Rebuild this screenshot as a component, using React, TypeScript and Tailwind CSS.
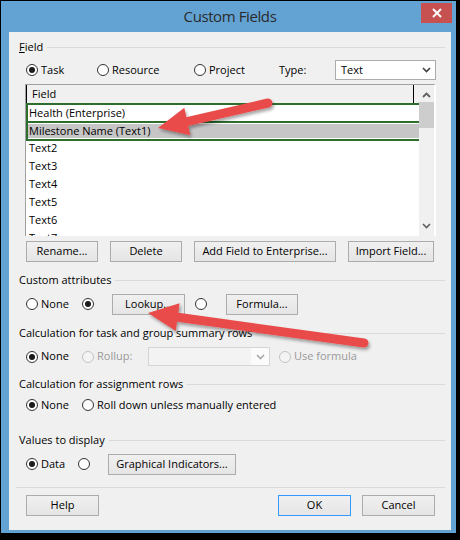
import React from "react";

function Radio({ checked = false, disabled = false }: { checked?: boolean; disabled?: boolean }) {
  return (
    <span
      className={
        disabled
          ? "flex h-3 w-3 shrink-0 items-center justify-center rounded-full border border-[#c2c2c2] bg-[#f4f4f4]"
          : "flex h-3 w-3 shrink-0 items-center justify-center rounded-full border border-[#333333] bg-white"
      }
    >
      {checked && <span className="h-[6px] w-[6px] rounded-full bg-[#1a1a1a]" />}
    </span>
  );
}

function RadioLabel({
  label,
  checked = false,
  disabled = false,
  className = "",
}: {
  label?: string;
  checked?: boolean;
  disabled?: boolean;
  className?: string;
}) {
  return (
    <div className={"flex shrink-0 items-center gap-[3px] " + className}>
      <Radio checked={checked} disabled={disabled} />
      {label && <span className={disabled ? "text-[#9a9a9a]" : "text-black"}>{label}</span>}
    </div>
  );
}

function Btn({ children, className = "", focused = false }: { children: React.ReactNode; className?: string; focused?: boolean }) {
  return (
    <div
      className={
        (focused ? "border-[#3399ff] " : "border-[#acacac] ") +
        "flex h-[21px] shrink-0 items-center justify-center border bg-linear-to-b from-[#f0f0f0] to-[#e5e5e5] text-black " +
        className
      }
    >
      {children}
    </div>
  );
}

function Section({ children, gap = "ml-[4px]" }: { children: React.ReactNode; gap?: string }) {
  return (
    <div className="flex h-4 items-center">
      <span className="whitespace-nowrap">{children}</span>
      <div className={"h-px flex-1 bg-[#dadada] " + gap} />
    </div>
  );
}

function ChevDown({ color = "#404040" }: { color?: string }) {
  return (
    <svg width="9" height="6" viewBox="0 0 9 6">
      <path d="M1 1 L4.5 4.5 L8 1" fill="none" stroke={color} strokeWidth="1.6" />
    </svg>
  );
}

function ChevUp({ color = "#606060" }: { color?: string }) {
  return (
    <svg width="9" height="6" viewBox="0 0 9 6">
      <path d="M1 5 L4.5 1.5 L8 5" fill="none" stroke={color} strokeWidth="1.8" />
    </svg>
  );
}

export default function App() {
  const rows = ["Text2", "Text3", "Text4", "Text5", "Text6", "Text7"];
  return (
    <div className="relative h-[540px] w-[460px] overflow-hidden bg-black pl-px pt-px font-['Open_Sans','Noto_Sans',sans-serif] text-[11px] text-black">
      <div className="flex h-[532px] w-[455px] flex-col bg-[#63a3d4]">
        {/* Title bar */}
        <div className="grid h-[31px] grid-cols-[1fr_auto_1fr]">
          <div />
          <div className="flex items-center pl-[3px] text-[15px] tracking-[-0.4px] text-[#2a2a2a]">Custom Fields</div>
          <div className="flex items-start justify-end pr-[4px] pt-[2px]">
            <div className="flex h-[20px] w-[31px] items-center justify-center bg-[#c75050]">
              <svg width="10" height="10" viewBox="0 0 10 10">
                <path d="M1 1 L9 9 M9 1 L1 9" stroke="#ffffff" strokeWidth="2" />
              </svg>
            </div>
          </div>
        </div>

        {/* Client */}
        <div className="ml-[8px] mr-[5px] flex h-[498px] flex-col bg-[#f0f0f0] pl-[10px] pr-[6px] pt-[7px]">
          <Section>
            <span className="underline">F</span>ield
          </Section>

          {/* Task / Resource / Project / Type */}
          <div className="ml-[7px] mt-[5px] flex h-[20px] items-center">
            <RadioLabel label="Task" checked className="w-[71px]" />
            <RadioLabel label="Resource" className="w-[97px]" />
            <RadioLabel label="Project" className="w-[85px]" />
            <span className="w-[56px]">Type:</span>
            <div className="flex h-[20px] w-[101px] items-center justify-between border border-[#acacac] bg-white pl-[5px] pr-[4px]">
              <span>Text</span>
              <ChevDown />
            </div>
          </div>

          {/* List */}
          <div className="ml-[6px] mt-[4px] flex h-[152px] w-[411px] border-l border-t border-[#a0a0a0] border-r-2 border-r-white bg-white">
            <div className="flex w-[393px] flex-col overflow-hidden">
              <div className="flex h-[18px] shrink-0 bg-[#f0f0f0]">
                <div className="flex w-[388px] items-center border-l border-r border-black pl-[5px]">Field</div>
              </div>
              <div className="shrink-0 border-b-2 border-l-2 border-t-2 border-[#2d6e2d]">
                <div className="flex h-[16px] items-center pl-px">Health (Enterprise)</div>
                <div className="h-[2px] bg-[#2d6e2d]" />
                <div className="h-[16px] pb-px pt-px">
                  <div className="flex h-[14px] items-center bg-[#c6c6c6] pl-px">Milestone Name (Text1)</div>
                </div>
              </div>
              <div className="-mt-[2px] flex flex-col">
                {rows.map((r) => (
                  <div key={r} className="flex h-[18px] shrink-0 items-center pl-[3px]">
                    {r}
                  </div>
                ))}
              </div>
            </div>
            <div className="flex w-[15px] flex-col bg-[#f0f0f0]">
              <div className="flex h-[17px] items-center justify-center pt-[2px]">
                <ChevUp />
              </div>
              <div className="h-[26px] bg-[#cdcdcd]" />
              <div className="flex-1" />
              <div className="flex h-[17px] items-center justify-center pb-[4px]">
                <ChevDown color="#606060" />
              </div>
            </div>
          </div>

          {/* Buttons */}
          <div className="ml-[7px] mt-[5px] flex h-[21px] gap-[12px]">
            <Btn className="w-[72px]">Rename...</Btn>
            <Btn className="w-[72px]">Delete</Btn>
            <Btn className="w-[142px]">Add Field to Enterprise...</Btn>
            <Btn className="w-[86px]">Import Field...</Btn>
          </div>

          <div className="mt-[10px]">
            <Section gap="ml-[3px]">Custom attributes</Section>
          </div>
          <div className="ml-[7px] mt-[6px] flex h-[20px] items-center">
            <RadioLabel label="None" className="w-[56px]" />
            <RadioLabel checked className="w-[30px]" />
            <Btn className="h-[20px] w-[73px]">Lookup...</Btn>
            <div className="w-[10px]" />
            <RadioLabel className="w-[31px]" />
            <Btn className="h-[20px] w-[72px]">Formula...</Btn>
          </div>

          <div className="mt-[11px]">
            <Section>Calculation for task and group summary rows</Section>
          </div>
          <div className="ml-[7px] mt-[6px] flex h-[19px] items-center">
            <RadioLabel label="None" checked className="w-[56px]" />
            <RadioLabel label="Rollup:" disabled className="w-[66px]" />
            <div className="flex h-[19px] w-[122px] border border-[#d5d5d5] bg-[#f3f3f3]">
              <div className="flex-1" />
              <div className="flex w-[18px] items-center justify-center bg-[#fbfbfb]">
                <ChevDown color="#a8a8a8" />
              </div>
            </div>
            <div className="w-[9px]" />
            <RadioLabel label="Use formula" disabled />
          </div>

          <div className="mt-[10px]">
            <Section>Calculation for assignment rows</Section>
          </div>
          <div className="ml-[7px] mt-[3px] flex h-[20px] items-center">
            <RadioLabel label="None" checked className="w-[56px]" />
            <RadioLabel label="Roll down unless manually entered" />
          </div>

          <div className="mt-[17px]">
            <Section>Values to display</Section>
          </div>
          <div className="ml-[7px] mt-[6px] flex h-[20px] items-center">
            <RadioLabel label="Data" checked className="w-[52px]" />
            <RadioLabel className="w-[30px]" />
            <Btn className="h-[20px] w-[128px]">Graphical Indicators...</Btn>
          </div>

          <div className="-ml-[3px] mt-[13px] h-px bg-[#dadada]" />

          <div className="mt-[7px] flex h-[21px] pr-[10px]">
            <Btn className="ml-[7px] w-[73px]">Help</Btn>
            <div className="flex-1" />
            <Btn focused className="w-[73px]">OK</Btn>
            <Btn className="ml-[11px] w-[73px]">Cancel</Btn>
          </div>
        </div>
      </div>

      {/* Annotation arrows */}
      <svg className="pointer-events-none absolute left-0 top-0" width="460" height="540" viewBox="0 0 460 540">
        <defs>
          <filter id="sh" x="-20%" y="-50%" width="140%" height="200%">
            <feDropShadow dx="1.5" dy="2.5" stdDeviation="1.5" floodColor="#000000" floodOpacity="0.35" />
          </filter>
        </defs>
        <g filter="url(#sh)" fill="#e84c4a">
          <line x1="268" y1="103" x2="186" y2="121.8" stroke="#e84c4a" strokeWidth="9" strokeLinecap="round" />
          <polygon points="158,128 184.3,107.8 190.3,135.2" />
        </g>
        <g filter="url(#sh)" fill="#e84c4a">
          <line x1="364" y1="343" x2="176" y2="317" stroke="#e84c4a" strokeWidth="9" strokeLinecap="round" />
          <polygon points="148,313 179.6,303.2 175.8,331" />
        </g>
      </svg>
    </div>
  );
}
